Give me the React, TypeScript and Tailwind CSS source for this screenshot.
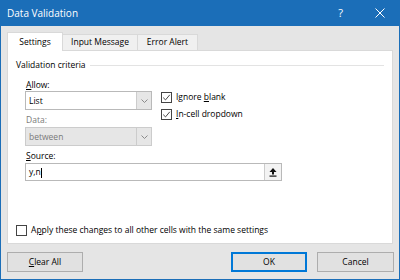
import React from "react";

const blue = "#1b6eb8";

function Chevron() {
  return (
    <svg width="7" height="4" viewBox="0 0 7 4" fill="none">
      <path d="M0.5 0.5 L3.5 3.5 L6.5 0.5" stroke="#8a8a8a" strokeWidth="1" />
    </svg>
  );
}

function Check({ checked }: { checked?: boolean }) {
  return (
    <span className="w-[11px] h-[11px] border border-[#444] bg-white flex items-center justify-center shrink-0">
      {checked && (
        <svg width="9" height="9" viewBox="0 0 9 9" fill="none">
          <path d="M1.2 4.6 L3.5 6.9 L7.8 1.8" stroke="#333" strokeWidth="0.9" />
        </svg>
      )}
    </span>
  );
}

function Combo({ value, disabled }: { value: string; disabled?: boolean }) {
  return (
    <div
      className={`h-[19px] w-[127px] flex border ${
        disabled ? "border-[#cccccc] bg-[#e6e6e6] text-[#7a7a7a]" : "border-[#b9b9b9] bg-white"
      }`}
    >
      <span className="flex-1 pl-[3px] leading-[17px]">{value}</span>
      <span className="w-[15px] flex items-center justify-center border-l border-[#cccccc] bg-[#e6e6e6]">
        <Chevron />
      </span>
    </div>
  );
}

function Btn({ children, primary, w }: { children: React.ReactNode; primary?: boolean; w: string }) {
  return (
    <div
      className={`${w} h-[20px] flex items-center justify-center bg-[#e1e1e1] ${
        primary ? "border-2 border-[#0078d7]" : "border border-[#adadad]"
      }`}
    >
      {children}
    </div>
  );
}

export default function App() {
  return (
    <div
      className="w-[400px] h-[280px] flex flex-col bg-[#e5e5e5] border-x border-b text-[8.5px] text-black"
      style={{ borderColor: blue, fontFamily: "'Open Sans', 'Noto Sans', sans-serif" }}
    >
      {/* title bar */}
      <div className="h-[26px] shrink-0 flex items-center text-white bg-[#1b6eb8]">
        <span className="pl-[6px] text-[10px] flex-1">Data Validation</span>
        <span className="text-[11px] mr-[32px]">?</span>
        <svg width="10" height="10" viewBox="0 0 10 10" className="mr-[14px]">
          <path d="M0.5 0.5 L9.5 9.5 M9.5 0.5 L0.5 9.5" stroke="white" strokeWidth="1" />
        </svg>
      </div>

      {/* tabs */}
      <div className="mt-[6px] ml-[6px] flex items-end h-[18px] relative z-10">
        <div className="w-[56px] h-[19px] bg-white border border-b-0 border-[#d9d9d9] flex items-center justify-center -mb-px">
          Settings
        </div>
        <div className="w-[75px] h-[16px] bg-[#f0f0f0] border border-l-0 border-b-0 border-[#d9d9d9] flex items-center justify-center">
          Input Message
        </div>
        <div className="w-[60px] h-[16px] bg-[#f0f0f0] border border-l-0 border-b-0 border-[#d9d9d9] flex items-center justify-center">
          Error Alert
        </div>
      </div>

      {/* panel */}
      <div className="ml-[6px] w-[386px] h-[194px] bg-white border border-[#d9d9d9] flex flex-col px-[8px] pt-[8px]">
        <div className="flex items-center h-[12px]">
          <span>Validation criteria</span>
          <span className="flex-1 h-px bg-[#e3e3e3] ml-[4px]" />
        </div>

        <div className="flex pl-[9px]">
          <div className="flex flex-col">
            <span className="mt-[8px] h-[12px] leading-[12px] pl-px">
              <u>A</u>llow:
            </span>
            <Combo value="List" />
            <span className="mt-[4px] h-[12px] leading-[12px] pl-px text-[#7a7a7a]">Data:</span>
            <div className="mt-px">
              <Combo value="between" disabled />
            </div>
          </div>
          <div className="ml-[9px] pt-[21px] flex flex-col gap-[6px]">
            <div className="flex items-center gap-[4px] h-[11px]">
              <Check checked />
              <span>
                Ignore <u>b</u>lank
              </span>
            </div>
            <div className="flex items-center gap-[4px] h-[11px]">
              <Check checked />
              <span>
                <u>I</u>n-cell dropdown
              </span>
            </div>
          </div>
        </div>

        <div className="pl-[9px] flex flex-col">
          <span className="mt-[4px] h-[12px] leading-[12px] pl-px">
            <u>S</u>ource:
          </span>
          <div className="mt-px w-[257px] h-[18px] border border-[#b9b9b9] flex">
            <span className="flex-1 pl-[3px] leading-[16px]">
              y,n<span className="inline-block w-px h-[10px] bg-black align-middle" />
            </span>
            <span className="w-[17px] flex items-center justify-center border-l border-[#cccccc] bg-[#f3f3f3]">
              <svg width="8" height="9" viewBox="0 0 8 9">
                <path d="M4 0 L7.5 4 L5 4 L5 6.5 L3 6.5 L3 4 L0.5 4 Z" fill="#111" />
                <rect x="0.5" y="7.5" width="7" height="1.2" fill="#111" />
              </svg>
            </span>
          </div>
        </div>

        <div className="mt-[43px] flex items-center gap-[4px]">
          <Check />
          <span>
            A<u>p</u>ply these changes to all other cells with the same settings
          </span>
        </div>
      </div>

      {/* buttons */}
      <div className="mt-[8px] ml-[6px] flex">
        <Btn w="w-[76px]">
          <span>
            <u>C</u>lear All
          </span>
        </Btn>
        <div className="flex-1" />
        <Btn w="w-[76px]" primary>
          OK
        </Btn>
        <div className="w-[10px]" />
        <Btn w="w-[77px]">Cancel</Btn>
        <div className="w-[5px]" />
      </div>
    </div>
  );
}
